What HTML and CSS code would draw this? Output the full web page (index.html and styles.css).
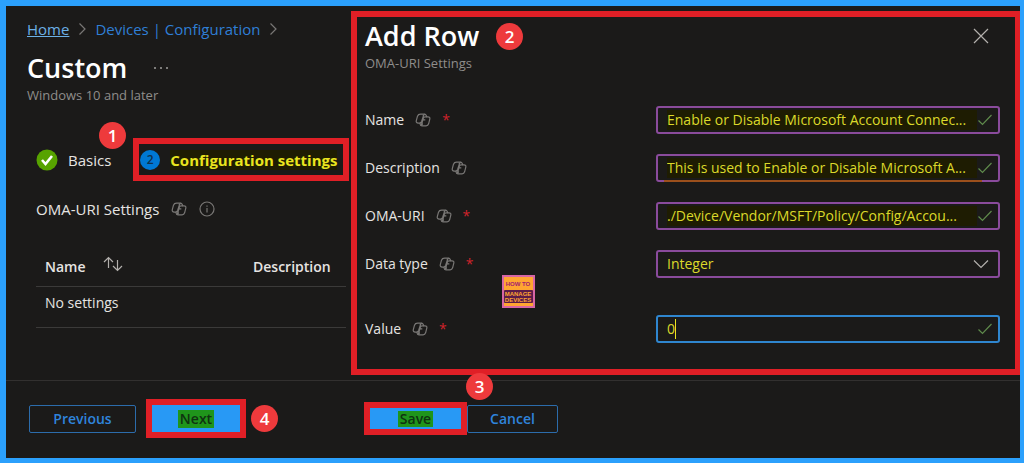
FILE: index.html
```
<!DOCTYPE html>
<html lang="en">
<head>
    <meta charset="UTF-8">
    <meta name="viewport" content="width=device-width, initial-scale=1.0">
    <title>Custom - Add Row</title>
    <link rel="stylesheet" href="styles.css">
</head>
<body>
    <!-- shared icons -->
    <svg class="sprite" aria-hidden="true">
        <symbol id="copilot" viewBox="0 0 16 16">
            <path d="M5.6 2.2h4.1c.8 0 1.2.5 1.5 1.2l.5 1.4h1.2c1.5 0 2.3 1 1.9 2.4l-1.2 4.6c-.4 1.3-1.2 2-2.5 2H7c-.9 0-1.4-.5-1.7-1.3l-.4-1.4H3.2c-1.5 0-2.3-1-1.9-2.4l1.2-4.5c.4-1.3 1.4-2 3.1-2z"/>
            <path d="M9.9 2.4c-.9.1-1.3.8-1.6 1.7L6.7 9.3c-.4 1.2-.9 1.8-2 1.8M11.7 4.8H10c-.9 0-1.4.5-1.7 1.5l-1.5 5.3c-.3 1.2-.8 1.9-1.4 1.7M7.6 7.8h2.7M8.3 2.4v3.2M7.2 10.8v2.7"/>
        </symbol>
        <symbol id="tick" viewBox="0 0 16 16">
            <path d="M1.5 8.5l4 4L14.5 3"/>
        </symbol>
        <symbol id="chevron" viewBox="0 0 16 16">
            <path d="M5.5 2.5L11 8l-5.5 5.5"/>
        </symbol>
    </svg>

    <div class="window">
        <div class="content">
            <div class="blade">
                <nav class="breadcrumb">
                    <a class="home" href="#">Home</a>
                    <svg class="icon sep"><use href="#chevron"/></svg>
                    <a href="#">Devices | Configuration</a>
                    <svg class="icon sep"><use href="#chevron"/></svg>
                </nav>
                <div class="title-row">
                    <h1>Custom</h1>
                    <button type="button" class="icon-btn" aria-label="More">
                        <svg class="icon dots" viewBox="0 0 16 16"><circle cx="2" cy="8" r="1"/><circle cx="8" cy="8" r="1"/><circle cx="14" cy="8" r="1"/></svg>
                    </button>
                </div>
                <p class="subtitle">Windows 10 and later</p>

                <div class="steps">
                    <a class="step" href="#">
                        <svg class="step-icon" viewBox="0 0 22 22"><circle cx="11" cy="11" r="10.5" fill="#57a300"/><path d="M6 11l3.5 4L16 7" fill="none" stroke="#fff" stroke-width="2.6"/></svg>
                        Basics
                    </a>
                    <a class="step current marked" href="#">
                        <span class="step-number">2</span>
                        <span class="highlight">Configuration settings</span>
                    </a>
                    <span class="badge badge-1">1</span>
                </div>

                <div class="section-label">
                    <span>OMA-URI Settings</span>
                    <svg class="icon"><use href="#copilot"/></svg>
                    <svg class="icon info" viewBox="0 0 16 16"><circle cx="8" cy="8" r="7"/><path d="M8 7v4.5M8 4.5v1.2"/></svg>
                </div>

                <table class="settings">
                    <thead>
                        <tr>
                            <th>Name
                                <svg class="sort" viewBox="0 0 20 16"><path d="M5.5 12V1.5M1 6l4.5-4.5L10 6M14.5 4v10.5M10 10l4.5 4.5L19 10"/></svg>
                            </th>
                            <th>Description</th>
                        </tr>
                    </thead>
                    <tbody>
                        <tr>
                            <td colspan="2">No settings</td>
                        </tr>
                    </tbody>
                </table>
            </div>

            <div class="panel">
                <div class="panel-head">
                    <div>
                        <div class="panel-title">
                            <h2>Add Row</h2>
                            <span class="badge">2</span>
                        </div>
                        <p class="subtitle">OMA-URI Settings</p>
                    </div>
                    <button type="button" class="icon-btn close" aria-label="Close">
                        <svg class="icon" viewBox="0 0 16 16"><path d="M1 1l14 14M15 1L1 15"/></svg>
                    </button>
                </div>

                <form class="form" id="row-form">
                    <div class="form-row">
                        <label for="name">Name <svg class="icon"><use href="#copilot"/></svg><span class="required">*</span></label>
                        <div class="field">
                            <input type="text" id="name" value="Enable or Disable Microsoft Account Connec...">
                            <svg class="icon valid"><use href="#tick"/></svg>
                        </div>
                    </div>
                    <div class="form-row">
                        <label for="description">Description <svg class="icon"><use href="#copilot"/></svg></label>
                        <div class="field underlined">
                            <input type="text" id="description" value="This is used to Enable or Disable Microsoft A...">
                            <svg class="icon valid"><use href="#tick"/></svg>
                        </div>
                    </div>
                    <div class="form-row">
                        <label for="oma-uri">OMA-URI <svg class="icon"><use href="#copilot"/></svg><span class="required">*</span></label>
                        <div class="field">
                            <input type="text" id="oma-uri" value="./Device/Vendor/MSFT/Policy/Config/Accou...">
                            <svg class="icon valid"><use href="#tick"/></svg>
                        </div>
                    </div>
                    <div class="form-row">
                        <label for="data-type">Data type <svg class="icon"><use href="#copilot"/></svg><span class="required">*</span></label>
                        <div class="field">
                            <select id="data-type">
                                <option>Integer</option>
                            </select>
                            <svg class="icon arrow" viewBox="0 0 16 16"><path d="M1 4.5l7 7 7-7"/></svg>
                        </div>
                    </div>
                    <div class="form-row value-row">
                        <label for="value">Value <svg class="icon"><use href="#copilot"/></svg><span class="required">*</span></label>
                        <div class="field focused">
                            <input type="text" id="value" value="0">
                            <span class="caret"></span>
                            <svg class="icon valid"><use href="#tick"/></svg>
                        </div>
                    </div>
                </form>

                <svg class="watermark" viewBox="0 0 33 33">
                    <rect width="33" height="33" fill="#d765a5"/>
                    <rect x="2" y="2" width="29" height="29" fill="#ffa531"/>
                    <rect x="2" y="15" width="29" height="13" rx="1" fill="#5b1c49"/>
                    <text x="16" y="11" fill="#a3206f">HOW TO</text>
                    <text x="16" y="21" fill="#ffa531">MANAGE</text>
                    <text x="16" y="27" fill="#ffa531">DEVICES</text>
                </svg>
            </div>
        </div>

        <div class="footer">
            <div class="actions">
                <button type="button" class="btn">Previous</button>
                <button type="button" class="btn primary next"><span>Next</span></button>
                <span class="badge">4</span>
            </div>
            <div class="actions row-actions">
                <button type="submit" form="row-form" class="btn primary save"><span>Save</span></button>
                <button type="button" class="btn cancel">Cancel</button>
                <span class="badge badge-3">3</span>
            </div>
        </div>
    </div>
</body>
</html>
```
FILE: styles.css
```
* {
    box-sizing: border-box;
}

body {
    margin: 0;
    background-color: #1b1a19;
    color: #e6e4e2;
    font-family: "Open Sans", "Noto Sans", sans-serif;
    font-size: 14px;
    line-height: 20px;
}

h1, h2, p {
    margin: 0;
}

h1, h2 {
    color: white;
    font-size: 27px;
    line-height: 34px;
    font-weight: 600;
}

a {
    color: #2f7fd6;
    text-decoration: none;
}

button, input, select {
    font: inherit;
}

.sprite {
    display: none;
}

.window {
    display: flex;
    flex-direction: column;
    min-height: 100vh;
    border: solid #2ba0fc;
    border-width: 6px 4px 5px 6px;
}

.content, .footer {
    display: grid;
    grid-template-columns: 345px 1fr;
}

.content {
    flex: 1;
    padding: 5px 0;
}

/* icons */
.icon {
    width: 16px;
    height: 16px;
    flex-shrink: 0;
    fill: none;
    stroke: #797775;
    stroke-width: 1.2;
}

.icon-btn {
    display: flex;
    padding: 0;
    border: none;
    background: none;
    cursor: pointer;
}

.dots {
    fill: #a19f9d;
    stroke: none;
}

.badge {
    display: inline-block;
    width: 27px;
    height: 27px;
    border-radius: 50%;
    background-color: #ee3a3c;
    color: white;
    font-size: 17px;
    line-height: 27px;
    font-weight: 600;
    text-align: center;
}

.marked {
    border: 6px solid #e01f26;
}

/* left side */
.blade {
    padding: 8px 4px 0 21px;
}

.breadcrumb {
    display: flex;
    align-items: center;
    gap: 5px;
    font-size: 15px;
}

.breadcrumb .home {
    color: #6cb0e6;
    text-decoration: underline;
}

.title-row {
    display: flex;
    align-items: center;
    gap: 26px;
    margin-top: 12px;
}

.subtitle {
    color: #8f8d8b;
    font-size: 13px;
}

.steps {
    position: relative;
    display: flex;
    align-items: center;
    gap: 22px;
    margin: 33px -2px 0 9px;
}

.step {
    display: flex;
    align-items: center;
    gap: 10px;
    color: #e6e4e2;
    font-size: 15px;
}

.step-icon {
    width: 22px;
    height: 22px;
}

.step.current {
    flex: 1;
    height: 43px;
    padding-left: 1px;
    font-weight: 700;
}

.step-number {
    width: 20px;
    height: 20px;
    border-radius: 50%;
    background-color: #0078d4;
    color: #10304c;
    font-size: 12px;
    font-weight: 600;
    text-align: center;
}

.highlight {
    background-color: #1e1c02;
    color: #e9e51f;
    white-space: nowrap;
}

.badge-1 {
    position: absolute;
    left: 63px;
    top: -16px;
}

.section-label {
    display: flex;
    align-items: center;
    gap: 12px;
    margin: 18px 0 0 9px;
    font-size: 15px;
}

.settings {
    width: calc(100% - 10px);
    margin: 26px 0 0 9px;
    border-collapse: collapse;
    text-align: left;
}

.settings th, .settings td {
    height: 41px;
    padding: 0 9px;
    border-bottom: 1px solid #3b3a39;
}

.settings th {
    padding-top: 3px;
    font-weight: 600;
}

.settings td {
    padding-bottom: 8px;
}

.settings th:last-child {
    width: 102px;
}

.sort {
    width: 20px;
    height: 16px;
    margin-left: 14px;
    fill: none;
    stroke: #b3b0ad;
    stroke-width: 1.2;
}

/* add row panel */
.panel {
    position: relative;
    padding: 2px 15px 26px 8px;
    border: 6px solid #e01f26;
    border-right-width: 5px;
}

.panel-head {
    display: flex;
    justify-content: space-between;
}

.panel-title {
    display: flex;
    align-items: center;
    gap: 17px;
}

.close {
    align-self: flex-start;
    margin: 9px 11px 0 0;
}

.close .icon {
    stroke: #b3b0ad;
}

.form {
    display: flex;
    flex-direction: column;
    gap: 20px;
    margin-top: 33px;
}

.form-row {
    display: grid;
    grid-template-columns: 291fr 344fr;
    align-items: center;
}

.form-row label {
    display: flex;
    align-items: center;
    gap: 11px;
}

.value-row {
    margin-top: 17px;
}

.required {
    color: #d1232b;
}

.field {
    position: relative;
    display: flex;
    align-items: center;
    height: 28px;
    padding: 0 5px 0 9px;
    border: 2px solid #8a4b9c;
    border-radius: 3px;
}

.field input, .field select {
    flex: 1;
    min-width: 0;
    height: 20px;
    padding: 0;
    border: none;
    outline: none;
    appearance: none;
    background-color: #1e1c02;
    color: #dcd92a;
}

.field select {
    background-color: transparent;
}

.field.underlined::after {
    content: "";
    position: absolute;
    left: 6px;
    right: 16px;
    bottom: -2px;
    height: 2px;
    background-color: #9c501c;
}

.field.focused {
    border: 2px solid #2f86cf;
}

.field.focused input {
    background-color: transparent;
}

.valid {
    stroke: #5f8a4c;
}

.arrow {
    margin-right: 4px;
    stroke: #b3b0ad;
}

.caret {
    position: absolute;
    left: 17px;
    width: 1px;
    height: 20px;
    background-color: #e9e51f;
}

.watermark {
    position: absolute;
    left: 145px;
    top: 258px;
    width: 33px;
    height: 33px;
    font-family: "Liberation Sans", sans-serif;
    font-size: 6px;
    font-weight: bold;
    text-anchor: middle;
}

/* bottom bar */
.footer {
    border-top: 1px solid #32302f;
    padding: 18px 0 20px;
}

.actions {
    display: flex;
    align-items: center;
    padding-left: 23px;
}

.row-actions {
    position: relative;
    padding-left: 13px;
}

.btn {
    width: 107px;
    height: 28px;
    padding: 0;
    border: 1px solid #2c6cab;
    border-radius: 2px;
    background-color: transparent;
    color: #2f84dc;
    font-weight: 600;
    line-height: 18px;
    cursor: pointer;
}

.btn.primary {
    border: 6px solid #e01f26;
    border-radius: 0;
    background-color: #2899f5;
    color: #0f3310;
}

.btn.primary span {
    display: inline-block;
    padding: 0 2px;
    background-color: #1f951b;
}

.btn.next {
    width: 100px;
    height: 39px;
    margin: 0 5px 0 10px;
}

.btn.save {
    width: 103px;
    height: 33px;
    line-height: 16px;
}

.btn.cancel {
    width: 91px;
}

.badge-3 {
    position: absolute;
    left: 115px;
    top: -26px;
}
```
